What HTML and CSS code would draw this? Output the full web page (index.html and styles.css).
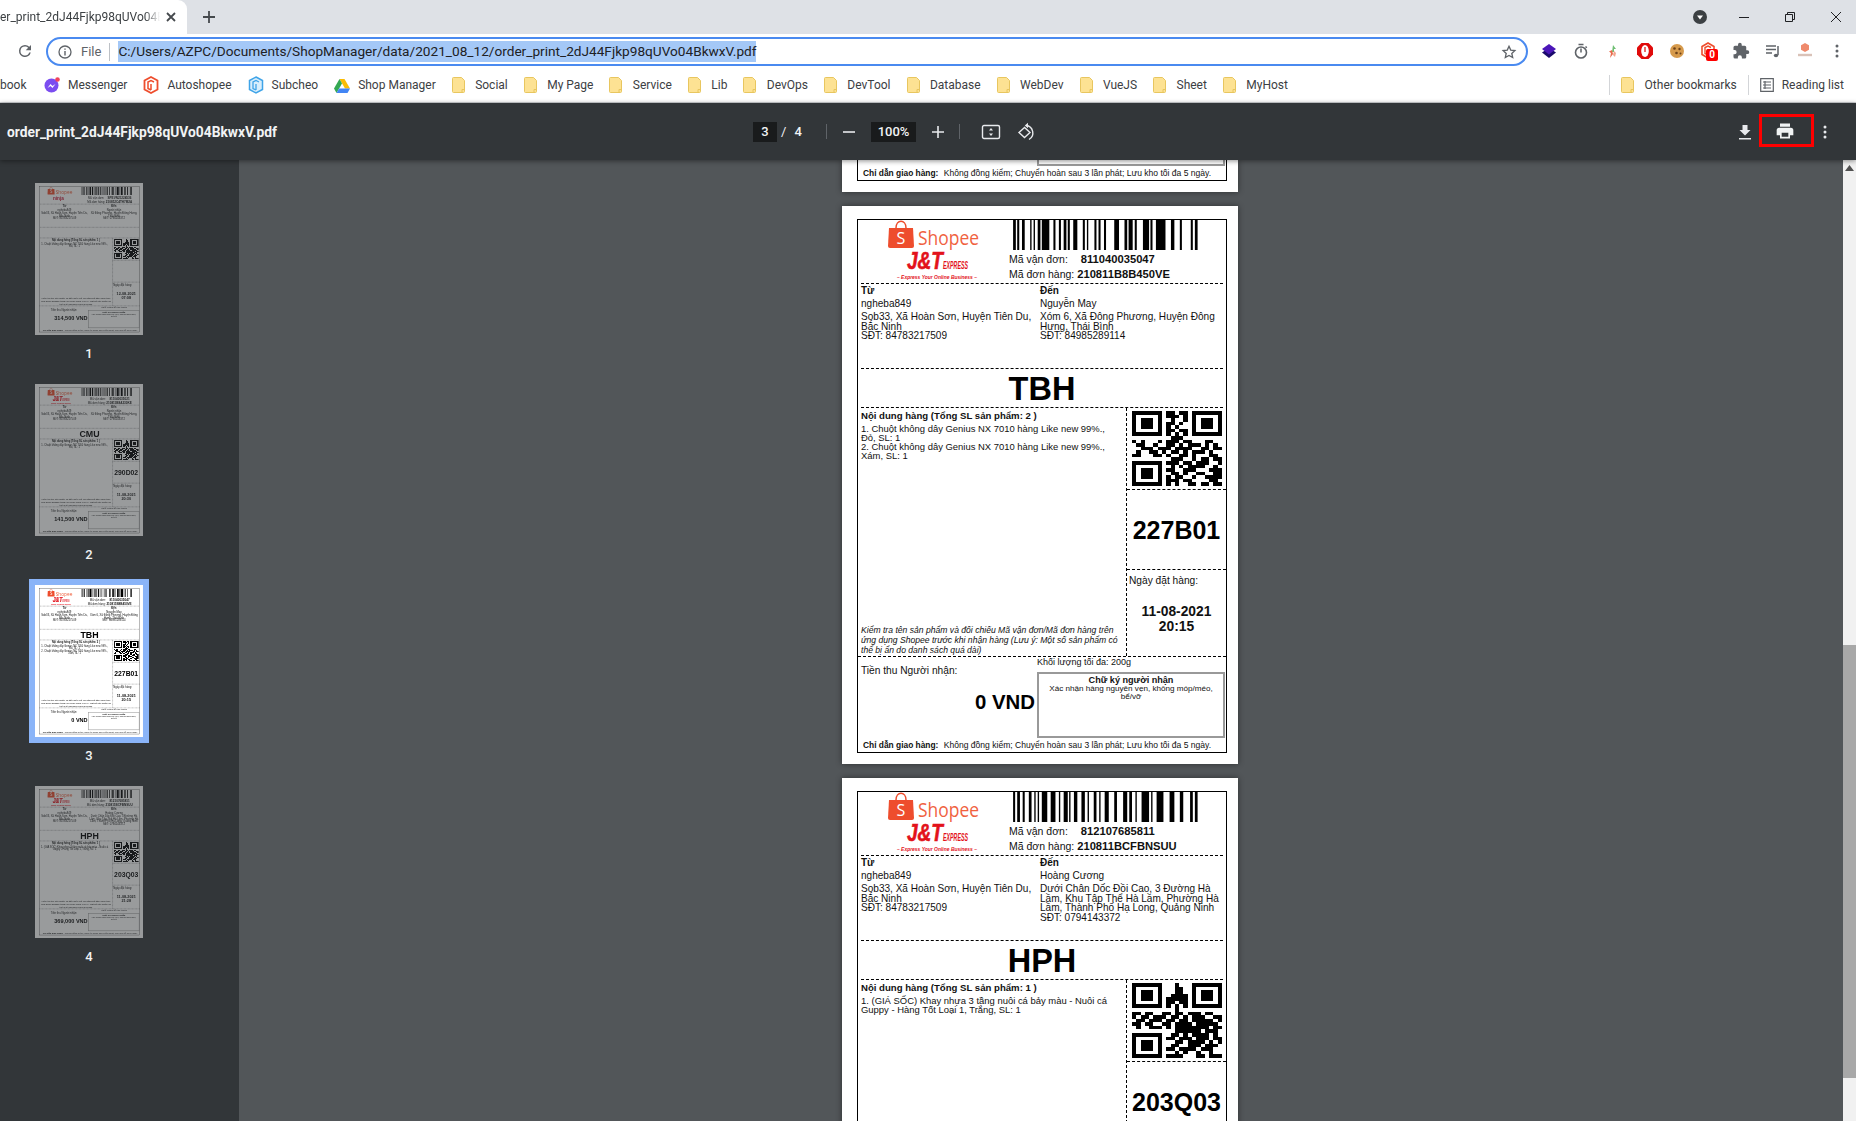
FILE: index.html
```html
<!DOCTYPE html>
<html lang="en">
<head>
  <meta charset="UTF-8">
  <title>order_print_2dJ44Fjkp98qUVo04BkwxV.pdf</title>
  <link rel="stylesheet" href="styles.css">
</head>
<body>
  <svg class="defs" width="0" height="0">
    <symbol id="folder" viewBox="0 0 14 16">
      <path d="M1.500.5h8l3 3v11a1 1 0 0 1-1 1h-10a1 1 0 0 1-1-1V1.500a1 1 0 0 1 1-1z" fill="#fde293" stroke="#e8c65f"/>
      <path d="M10 15.500v-3h3" fill="none" stroke="#e8c65f"/>
    </symbol>
  </svg>

  <div class="tabstrip">
    <div class="tab">
      <span class="tab-title">er_print_2dJ44Fjkp98qUVo04Bkwx</span>
      <svg class="tab-close" width="10" height="10" viewBox="0 0 10 10"><path d="M1 1l8 8M9 1l-8 8" stroke="#45494d" stroke-width="1.800"/></svg>
    </div>
    <svg class="new-tab" width="14" height="14" viewBox="0 0 14 14"><path d="M7 1v12M1 7h12" stroke="#45494d" stroke-width="1.800"/></svg>
    <div class="win-controls">
      <svg class="tab-search" width="14" height="14" viewBox="0 0 14 14"><circle cx="7" cy="7" r="7" fill="#3c4043"/><path d="M4 5.500h6L7 9.500z" fill="#fff"/></svg>
      <svg class="win-btn" width="12" height="12" viewBox="0 0 12 12"><path d="M1 6.500h10" stroke="#202124"/></svg>
      <svg class="win-btn" width="12" height="12" viewBox="0 0 12 12"><path d="M1.500 3.500h7v7h-7zM3.500 3.500v-2h7v7h-2" fill="none" stroke="#202124"/></svg>
      <svg class="win-btn" width="12" height="12" viewBox="0 0 12 12"><path d="M1 1l10 10M11 1L1 11" stroke="#202124"/></svg>
    </div>
  </div>

  <div class="navbar">
    <svg class="reload" width="18" height="18" viewBox="0 0 24 24"><path fill="#5f6368" d="M17.650 6.350A7.960 7.960 0 0 0 12 4a8 8 0 1 0 7.730 10h-2.080A6 6 0 1 1 12 6c1.660 0 3.140.69 4.220 1.780L13 11h7V4z"/></svg>
    <div class="omnibox">
      <svg class="info" width="14" height="14" viewBox="0 0 14 14"><circle cx="7" cy="7" r="6" fill="none" stroke="#5f6368" stroke-width="1.300"/><path d="M7 6v4.500M7 3.500v1.300" stroke="#5f6368" stroke-width="1.400"/></svg>
      <span class="scheme">File</span>
      <span class="omni-sep"></span>
      <span class="url">C:/Users/AZPC/Documents/ShopManager/data/2021_08_12/order_print_2dJ44Fjkp98qUVo04BkwxV.pdf</span>
      <svg class="star" width="16" height="16" viewBox="0 0 24 24"><path fill="none" stroke="#5f6368" stroke-width="2" d="M12 3.500l2.600 5.700 6.200.7-4.600 4.200 1.300 6.100-5.500-3.100-5.500 3.100 1.300-6.100-4.600-4.200 6.200-.7z"/></svg>
    </div>
    <div class="extensions">
      <svg class="ext" width="16" height="16" viewBox="0 0 16 16"><path fill="#1a0a6b" d="M8 5l7 4.500L8 15 1 9.500z"/><path fill="#4b16b8" d="M8 1l7 5-7 5.500L1 6z"/></svg>
      <svg class="ext" width="16" height="16" viewBox="0 0 16 16"><circle cx="8" cy="9.500" r="5.500" fill="none" stroke="#5f6368" stroke-width="1.600"/><path d="M5.500 1.500h5M8 5.500v4M12.500 3.500l1.300 1.300" stroke="#5f6368" stroke-width="1.500" fill="none"/></svg>
      <svg class="ext" width="16" height="16" viewBox="0 0 16 16"><path d="M8 2l3 4H9v3H7z" fill="#6fbf73"/><path d="M7 7l-3 1.500L6 10l-1 5 3-4z" fill="#e8694a"/><path d="M9 8l2 2-1 4-2-2z" fill="#f3a58f"/></svg>
      <svg class="ext" width="18" height="18" viewBox="0 0 18 18"><path fill="#e00b0b" d="M5.500 1h7L17 5.500v7L12.500 17h-7L1 12.500v-7z"/><ellipse cx="9" cy="9" rx="3.800" ry="6" fill="#fff"/><path fill="#e00b0b" d="M8.400 5h1.200v5h-1.200z"/></svg>
      <svg class="ext" width="16" height="16" viewBox="0 0 16 16"><circle cx="8" cy="8" r="7" fill="#d69a4c"/><circle cx="5.500" cy="5.500" r="1.300" fill="#6d4219"/><circle cx="10.500" cy="6" r="1.200" fill="#6d4219"/><circle cx="7.500" cy="10" r="1.300" fill="#6d4219"/><circle cx="11.500" cy="10.500" r="1" fill="#6d4219"/></svg>
      <div class="ext ext-badge">
        <svg width="16" height="18" viewBox="0 0 16 18"><path d="M8 1l6 3.500v8L8 16l-6-3.500v-8z" fill="none" stroke="#ee4d2d" stroke-width="1.600"/><path d="M11 5.500L8 4 5 5.500v6l3 1.500M8 7v6" fill="none" stroke="#ee4d2d" stroke-width="1.400"/></svg>
        <span class="badge">0</span>
      </div>
      <svg class="ext" width="18" height="18" viewBox="0 0 24 24"><path fill="#5f6368" d="M20.500 11H19V7a2 2 0 0 0-2-2h-4V3.500a2.500 2.500 0 0 0-5 0V5H4a2 2 0 0 0-2 2v3.800h1.500a2.700 2.700 0 0 1 0 5.400H2V20a2 2 0 0 0 2 2h3.800v-1.500a2.700 2.700 0 0 1 5.400 0V22H17a2 2 0 0 0 2-2v-4h1.500a2.500 2.500 0 0 0 0-5z"/></svg>
      <svg class="ext" width="16" height="16" viewBox="0 0 16 16"><path d="M1 3h10M1 6.500h10M1 10h6" stroke="#5f6368" stroke-width="1.400"/><path d="M13 3v9" stroke="#5f6368" stroke-width="1.500"/><ellipse cx="11" cy="12.500" rx="2.200" ry="1.700" fill="#5f6368"/></svg>
      <svg class="ext" width="18" height="18" viewBox="0 0 18 18"><path d="M9 1l4 2.300v4.400L9 10 5 7.700V3.300z" fill="#ef8a6c"/><path d="M2 13h14" stroke="#d9c2b8" stroke-width="2.400"/></svg>
      <svg class="ext" width="16" height="16" viewBox="0 0 16 16"><circle cx="8" cy="3" r="1.500" fill="#5f6368"/><circle cx="8" cy="8" r="1.500" fill="#5f6368"/><circle cx="8" cy="13" r="1.500" fill="#5f6368"/></svg>
    </div>
  </div>

  <div class="bookmarks">
    <span class="bm-cut">book</span>
    <a class="bm">
      <svg width="16" height="16" viewBox="0 0 16 16"><circle cx="7.500" cy="8.500" r="7" fill="#7b4df0"/><path d="M3.500 11l3-4 2 2 3-2-3 4-2-2z" fill="#fff"/><circle cx="13.500" cy="2.500" r="2.300" fill="#f0445c"/></svg>
      Messenger
    </a>
    <a class="bm">
      <svg width="16" height="18" viewBox="0 0 16 18"><path d="M8 1l6.500 3.500v9L8 17l-6.500-3.500v-9z" fill="none" stroke="#ee4d2d" stroke-width="1.800"/><path d="M11 6L8 4.500 5 6v6.500l3 1.500M8 8v6" fill="none" stroke="#ee4d2d" stroke-width="1.500"/></svg>
      Autoshopee
    </a>
    <a class="bm">
      <svg width="16" height="18" viewBox="0 0 16 18"><path d="M8 1l6.500 3.500v9L8 17l-6.500-3.500v-9z" fill="#d8eefc" stroke="#3fa4e8" stroke-width="1.500"/><path d="M11 6L8 4.500 5 6v6.500l3 1.500M8 8v6" fill="none" stroke="#3fa4e8" stroke-width="1.300"/></svg>
      Subcheo
    </a>
    <a class="bm">
      <svg width="16" height="15" viewBox="0 0 16 15"><path d="M5.500 1h5L16 10.500h-5z" fill="#fbbc04"/><path d="M5.500 1L0 10.500 2.500 15 8 5.500z" fill="#34a853"/><path d="M2.500 15h11l2.500-4.500H5z" fill="#4285f4"/></svg>
      Shop Manager
    </a>
    <a class="bm"><svg class="fold" width="14" height="16"><use href="#folder"/></svg>Social</a>
    <a class="bm"><svg class="fold" width="14" height="16"><use href="#folder"/></svg>My Page</a>
    <a class="bm"><svg class="fold" width="14" height="16"><use href="#folder"/></svg>Service</a>
    <a class="bm"><svg class="fold" width="14" height="16"><use href="#folder"/></svg>Lib</a>
    <a class="bm"><svg class="fold" width="14" height="16"><use href="#folder"/></svg>DevOps</a>
    <a class="bm"><svg class="fold" width="14" height="16"><use href="#folder"/></svg>DevTool</a>
    <a class="bm"><svg class="fold" width="14" height="16"><use href="#folder"/></svg>Database</a>
    <a class="bm"><svg class="fold" width="14" height="16"><use href="#folder"/></svg>WebDev</a>
    <a class="bm"><svg class="fold" width="14" height="16"><use href="#folder"/></svg>VueJS</a>
    <a class="bm"><svg class="fold" width="14" height="16"><use href="#folder"/></svg>Sheet</a>
    <a class="bm"><svg class="fold" width="14" height="16"><use href="#folder"/></svg>MyHost</a>
    <div class="bm-right">
      <span class="bm-sep"></span>
      <a class="bm"><svg class="fold" width="14" height="16"><use href="#folder"/></svg>Other bookmarks</a>
      <span class="bm-sep"></span>
      <a class="bm">
        <svg width="14" height="14" viewBox="0 0 14 14"><path d="M.7.7h12.600v12.600H.7zM3 4h8M3 7h8M3 10h8M5 3v8" fill="none" stroke="#5f6368" stroke-width="1.200"/></svg>
        Reading list
      </a>
    </div>
  </div>

  <div class="pdf-toolbar">
    <div class="pdf-title">order_print_2dJ44Fjkp98qUVo04BkwxV.pdf</div>
    <div class="pager">
      <span class="num-box page-box">3</span>
      <span class="slash">/</span>
      <span class="total">4</span>
    </div>
    <span class="tb-sep sep-one"></span>
    <svg class="tb-icon minus" width="14" height="14" viewBox="0 0 14 14"><path d="M1 7h12" stroke="#e8eaed" stroke-width="1.600"/></svg>
    <span class="num-box zoom-box">100%</span>
    <svg class="tb-icon plus" width="14" height="14" viewBox="0 0 14 14"><path d="M1 7h12M7 1v12" stroke="#e8eaed" stroke-width="1.600"/></svg>
    <span class="tb-sep sep-two"></span>
    <svg class="tb-icon fit" width="20" height="16" viewBox="0 0 20 16"><rect x="1.500" y="1.500" width="17" height="13" rx="1.500" fill="none" stroke="#e8eaed" stroke-width="1.400"/><path d="M10 4l2 2.500H8zM10 12L8 9.500h4z" fill="#e8eaed"/></svg>
    <svg class="tb-icon rotate" width="20" height="20" viewBox="0 0 20 20"><path d="M7.500 5.500L2 10.500l5.500 5 5.500-5z" fill="none" stroke="#e8eaed" stroke-width="1.400"/><path d="M9 3.500a7.500 7.500 0 0 1 3 14" fill="none" stroke="#e8eaed" stroke-width="1.400"/><path d="M11 .8L7.800 3.500 11 6.200z" fill="#e8eaed"/></svg>
    <div class="tb-right">
      <svg class="tb-icon" width="14" height="16" viewBox="0 0 14 16"><path d="M4.500 1h5v5h3L7 11.500 1.500 6h3zM1 14h12v1.600H1z" fill="#e8eaed"/></svg>
      <div class="print-mark">
        <svg width="20" height="20" viewBox="0 0 24 24"><path fill="#f1f3f4" d="M19 8H5a3 3 0 0 0-3 3v6h4v4h12v-4h4v-6a3 3 0 0 0-3-3zm-3 11H8v-5h8zM18 3H6v4h12z"/></svg>
      </div>
      <svg class="tb-icon" width="4" height="14" viewBox="0 0 4 14"><circle cx="2" cy="2" r="1.500" fill="#e8eaed"/><circle cx="2" cy="7" r="1.500" fill="#e8eaed"/><circle cx="2" cy="12" r="1.500" fill="#e8eaed"/></svg>
    </div>
  </div>

  <div class="viewer">
    <div id="thumbs" class="thumbs"></div>
    <div class="doc">
      <div id="pages" class="pages"></div>
    </div>
    <div class="scrollbar">
      <div class="sb-arrow"><svg width="9" height="6" viewBox="0 0 9 6"><path d="M4.500 0L9 6H0z" fill="#505050"/></svg></div>
      <div class="sb-thumb"></div>
    </div>
  </div>

  <script src="script.js"></script>
</body>
</html>
```

FILE: styles.css
```css
* {
  box-sizing: border-box;
}
body {
  margin: 0;
  height: 100vh;
  overflow: hidden;
  display: flex;
  flex-direction: column;
  font-family: Roboto, "Liberation Sans", sans-serif;
  background: #525659;
}
.defs {
  position: absolute;
}

/* browser chrome */
.tabstrip {
  height: 34px;
  flex: none;
  background: #dee1e6;
  display: flex;
  align-items: center;
}
.tab {
  width: 187px;
  height: 34px;
  background: #fff;
  border-radius: 0 9px 0 0;
  display: flex;
  align-items: center;
  padding-right: 11px;
}
.tab-title {
  flex: 1;
  overflow: hidden;
  white-space: nowrap;
  font-size: 12px;
  color: #3c4043;
  -webkit-mask-image: linear-gradient(to right, #000 145px, transparent 160px);
  mask-image: linear-gradient(to right, #000 145px, transparent 160px);
}
.new-tab {
  margin-left: 15px;
}
.win-controls {
  margin-left: auto;
  display: flex;
  align-items: center;
  padding-right: 14px;
}
.tab-search {
  margin-right: 31px;
}
.win-btn {
  margin-left: 34px;
}
.tab-search + .win-btn {
  margin-left: 0;
}
.navbar {
  height: 34px;
  flex: none;
  background: #fff;
  display: flex;
  align-items: center;
}
.reload {
  margin-left: 16px;
  flex: none;
}
.omnibox {
  width: 1482px;
  height: 29px;
  flex: none;
  margin: 1px 0 0 12px;
  border: 2px solid #4a8af0;
  border-radius: 15px;
  display: flex;
  align-items: center;
  padding: 0 9px 0 10px;
}
.scheme {
  font-size: 13px;
  color: #5f6368;
  margin-left: 9px;
}
.omni-sep {
  width: 1px;
  height: 18px;
  background: #bdc1c6;
  margin: 0 8px 0 8px;
}
.url {
  font-size: 13.650px;
  line-height: 21px;
  background: #a4c8f7;
  color: #202124;
  white-space: nowrap;
}
.star {
  margin-left: auto;
}
.extensions {
  display: flex;
  align-items: center;
  margin-left: 12px;
}
.ext {
  width: 18px;
  margin-right: 14px;
  flex: none;
  position: relative;
  display: block;
}
.ext:last-child {
  margin-right: 0;
}
.ext-badge {
  height: 18px;
}
.badge {
  position: absolute;
  left: 6px;
  top: 7px;
  width: 12px;
  height: 12px;
  background: #f00;
  color: #fff;
  border-radius: 2px;
  font-size: 10px;
  font-weight: 700;
  line-height: 12px;
  text-align: center;
}
.bookmarks {
  height: 35px;
  flex: none;
  background: #fff;
  border-bottom: 1px solid #d3d5d8;
  display: flex;
  align-items: center;
  font-size: 12px;
  color: #3c4043;
  white-space: nowrap;
}
.bm-cut {
  width: 36px;
}
.bm {
  display: flex;
  align-items: center;
  gap: 8px;
  padding: 0 8px;
}
.bm .fold {
  margin-right: 1.400px;
}
.bm-right {
  margin-left: auto;
  display: flex;
  align-items: center;
  padding-right: 4px;
}
.bm-sep {
  width: 1px;
  height: 20px;
  background: #d3d5d8;
  margin: 0 3px;
}

/* pdf toolbar */
.pdf-toolbar {
  height: 57px;
  flex: none;
  background: #323639;
  color: #f1f3f4;
  display: flex;
  align-items: center;
  position: relative;
  z-index: 2;
  box-shadow: 0 1px 5px rgba(0, 0, 0, 0.45);
}
.pdf-title {
  width: 753px;
  padding-left: 7px;
  font-size: 13.800px;
  font-weight: 700;
  flex: none;
}
.pager {
  display: flex;
  align-items: center;
  width: 73px;
  flex: none;
  font-size: 13px;
}
.num-box {
  background: #191b1c;
  height: 20px;
  line-height: 20px;
  text-align: center;
  font-size: 13px;
  font-weight: 500;
  flex: none;
}
.page-box {
  width: 24px;
}
.slash {
  margin-left: 4px;
}
.total {
  margin-left: 8px;
  font-weight: 500;
}
.tb-sep {
  width: 1px;
  height: 15px;
  background: #5f6368;
  flex: none;
}
.tb-icon {
  flex: none;
}
.minus {
  margin-left: 15px;
}
.zoom-box {
  width: 45px;
  margin-left: 15px;
}
.plus {
  margin-left: 15px;
}
.sep-two {
  margin-left: 14px;
}
.fit {
  margin-left: 21px;
}
.rotate {
  margin-left: 16px;
}
.tb-right {
  margin-left: auto;
  display: flex;
  align-items: center;
  padding-right: 29px;
}
.print-mark {
  width: 55px;
  height: 33px;
  margin: -2px 9px 0 7px;
  padding-right: 4px;
  border: 3px solid #f00;
  display: flex;
  align-items: center;
  justify-content: center;
}

/* viewer */
.viewer {
  flex: 1;
  min-height: 0;
  display: flex;
  position: relative;
}
.thumbs {
  width: 239px;
  flex: none;
  background: #323639;
  padding-top: 23px;
  overflow: hidden;
}
.thumb-item {
  height: 201px;
  margin-left: 35px;
  width: 108px;
  color: #f1f3f4;
  text-align: center;
  font-size: 13px;
  font-weight: 500;
}
.thumb-img {
  width: 108px;
  height: 152px;
  overflow: hidden;
  margin-bottom: 11px;
  opacity: 0.5;
}
.thumb-scale {
  width: 396px;
  transform: scale(0.2727);
  transform-origin: 0 0;
  filter: blur(0.5px);
}
.thumb-item.active .thumb-img {
  opacity: 1;
  outline: 6px solid #8ab4f8;
}
.doc {
  flex: 1;
  min-width: 0;
  overflow: hidden;
  padding-right: 2px;
}
.pages {
  display: flex;
  flex-direction: column;
  align-items: center;
  gap: 14px;
}
.scrollbar {
  width: 13px;
  flex: none;
  background: #f1f1f1;
  position: relative;
}
.sb-arrow {
  height: 15px;
  display: flex;
  align-items: center;
  justify-content: center;
}
.sb-thumb {
  margin-top: 470px;
  height: 433px;
  background: #a8a8a8;
}

/* shipping label page */
.page {
  width: 396px;
  height: 558px;
  flex: none;
  background: #fff;
  padding: 13px 11px 11px 15px;
  box-shadow: 0 0 6px rgba(0, 0, 0, 0.45);
  font-family: "Liberation Sans", Arial, sans-serif;
  color: #111;
  font-size: 10.200px;
}
.page-tail {
  height: 32px;
  padding-top: 0;
}
.label {
  height: 534px;
  border: 1px solid #000;
  display: flex;
  flex-direction: column;
}
.page-tail .label {
  height: 21px;
  border-top: 0;
}
.sign-stub {
  width: 188px;
  height: 6px;
  margin-left: 179px;
  flex: none;
  border: 2px solid #999;
  border-top: 0;
}
.l-head {
  height: 64px;
  flex: none;
  display: flex;
  margin: 0 3px;
  border-bottom: 1px dashed #000;
}
.logo {
  width: 149px;
  margin-left: -3px;
  flex: none;
}
.head-right {
  flex: 1;
  padding-left: 2px;
  font-size: 10.500px;
  line-height: 15px;
}
.barcode {
  display: block;
  width: 205px;
  height: 30px;
  margin: 0 0 2px 0;
}
.tracking b {
  display: inline-block;
  font-size: 11.200px;
  font-weight: 700;
}
.track-gap {
  margin-left: 10px;
}
.l-addr {
  height: 85px;
  flex: none;
  margin: 0 3px;
  border-bottom: 1px dashed #000;
  display: flex;
  font-size: 10.050px;
  line-height: 9.500px;
}
.addr-col {
  width: 179px;
  padding-top: 1px;
  padding-right: 1px;
  flex: none;
}
.addr-col + .addr-col {
  flex: 1;
  padding-right: 0;
}
.addr-col h4 {
  margin: 0;
  font-size: 10px;
  line-height: 11px;
}
.addr-name {
  margin: 2px 0 2px;
  line-height: 12px;
}
.l-code {
  height: 39px;
  flex: none;
  margin: 0 3px;
  border-bottom: 1px dashed #000;
  text-align: center;
  font-size: 32.500px;
  font-weight: 700;
  line-height: 40px;
  color: #000;
}
.l-content {
  height: 249px;
  flex: none;
  display: flex;
  border-bottom: 1px dashed #000;
}
.c-left {
  flex: 1;
  padding: 3px 3px 1px 3px;
  display: flex;
  flex-direction: column;
  font-size: 9.450px;
  line-height: 9px;
}
.c-title {
  font-size: 9.600px;
  font-weight: 700;
  line-height: 10px;
  margin-bottom: 3px;
}
.c-item {
  padding-right: 10px;
}
.c-note {
  margin-top: auto;
  font-style: italic;
  font-size: 8.600px;
  line-height: 10px;
}
.c-right {
  width: 100px;
  flex: none;
  border-left: 1px dashed #000;
  display: flex;
  flex-direction: column;
}
.c-qr {
  height: 82px;
  flex: none;
  border-bottom: 1px dashed #000;
  padding: 3px 4px 4px 5px;
}
.c-qr svg {
  display: block;
  width: 90px;
  height: 75px;
}
.c-sort {
  height: 80px;
  flex: none;
  border-bottom: 1px dashed #000;
  text-align: center;
  font-size: 25px;
  font-weight: 700;
  line-height: 80px;
  color: #000;
}
.c-date {
  flex: 1;
  padding-top: 6px;
  text-align: center;
  font-size: 13.800px;
  font-weight: 700;
  line-height: 14.500px;
}
.c-date p {
  margin: 0 0 19px 2px;
  text-align: left;
  font-size: 10.200px;
  line-height: 10px;
  font-weight: 400;
}
.l-bottom {
  height: 81px;
  flex: none;
  display: flex;
}
.b-left {
  width: 179px;
  flex: none;
  padding: 8px 2px 0 3px;
  line-height: 12px;
}
.b-amount {
  margin-top: 15px;
  text-align: right;
  font-size: 20.400px;
  font-weight: 700;
  line-height: 20px;
  color: #000;
}
.b-right {
  flex: 1;
  font-size: 9px;
  line-height: 10px;
}
.sign {
  width: 188px;
  height: 66px;
  margin-top: 5px;
  border: 2px solid #999;
  text-align: center;
  font-size: 8.100px;
  line-height: 8px;
  padding: 2px 6px 0;
}
.sign b {
  display: block;
  font-size: 9.100px;
  line-height: 9px;
}
.l-guide {
  flex: 1;
  padding-left: 5px;
  font-size: 8.550px;
  line-height: 14px;
  white-space: nowrap;
}
.l-guide b {
  margin-right: 3px;
  font-size: 8.400px;
}
```

FILE: script.js
```js
// page data for the shipping labels, used for both the pages and the thumbnails
const BAR_A = [[12,20],[24,30],[38,46],[62,66],[72,76],[84,92],[96,118],[130,136],[146,152],[160,168],[172,178],[188,200],[216,222],[228,232],[250,256],[262,268],[278,284],[308,322],[338,346],[350,362],[368,374],[392,410],[414,420],[430,458],[474,484],[500,506],[532,538],[544,552]];
const BAR_B = [[12,18],[24,32],[40,46],[58,66],[74,78],[84,88],[96,112],[122,136],[146,150],[160,172],[176,180],[190,200],[212,222],[230,234],[248,256],[264,268],[280,292],[308,316],[334,346],[352,360],[370,374],[388,410],[416,420],[432,452],[470,484],[500,510],[530,538],[544,552]];

const QR_A = {
  top: ["11011","11101","01001","11010","10100","11011","10101","01110"],
  mid: ["101000101110110001100","011001001101011101010","001110111011110011011","010011010110101110100","110001101001101000110"],
  bottom: ["0111001011011","1110110111001","0101011110010","1100111000111","0110100110011","1011001001111","1110110000110","1010011011011"]
};
const QR_B = {
  top: ["00100","00110","00110","01111","11111","11011","10101","00100"],
  mid: ["110110011011011101100","101101110110101110011","011011101101101111101","110110011011110111110","010011101011111111011"],
  bottom: ["0011111101110","0110101111010","1101110111011","0011011110101","0110011101110","1101111011100","0010100100100","1111000110111"]
};

const SENDER = { name: "ngheba849", addr: "Sob33, Xã Hoàn Sơn, Huyện Tiên Du, Bắc Ninh", phone: "84783217509" };
const NOTE = "Kiểm tra tên sản phẩm và đối chiếu Mã vận đơn/Mã đơn hàng trên ứng dụng Shopee trước khi nhận hàng (Lưu ý: Một số sản phẩm có thể bị ẩn do danh sách quá dài)";
const GUIDE = `<b>Chỉ dẫn giao hàng:</b> Không đồng kiểm; Chuyển hoàn sau 3 lần phát; Lưu kho tối đa 5 ngày.`;

const pagesData = [
  { carrier: "ninja", tracking: "SPEVN21224536", order: "210812C4TH7M2A", code: "", sort: "", total: 1,
    to: { name: "Người nhận", addr: "Xã Đông Phương, Huyện Đông Hưng, Thái Bình", phone: "0794143372" },
    items: ["1. Chuột không dây Genius NX 7010 hàng Like new 99%., Đỏ, SL: 1"],
    date: "12-08-2021", time: "07:08", amount: "314,500 VND", bars: BAR_B, qr: QR_B },
  { carrier: "jt", tracking: "811040035021", order: "210811B8A230KE", code: "CMU", sort: "290D02", total: 1,
    to: { name: "Người nhận", addr: "Xã Đông Phương, Huyện Đông Hưng, Thái Bình", phone: "0794143372" },
    items: ["1. Chuột không dây Genius NX 7010 hàng Like new 99%., Đỏ, SL: 1"],
    date: "11-08-2021", time: "20:30", amount: "141,500 VND", bars: BAR_B, qr: QR_B },
  { carrier: "jt", tracking: "811040035047", order: "210811B8B450VE", code: "TBH", sort: "227B01", total: 2,
    to: { name: "Nguyễn May", addr: "Xóm 6, Xã Đông Phương, Huyện Đông Hưng, Thái Bình", phone: "84985289114" },
    items: ["1. Chuột không dây Genius NX 7010 hàng Like new 99%., Đỏ, SL: 1", "2. Chuột không dây Genius NX 7010 hàng Like new 99%., Xám, SL: 1"],
    date: "11-08-2021", time: "20:15", amount: "0 VND", bars: BAR_A, qr: QR_A },
  { carrier: "jt", tracking: "812107685811", order: "210811BCFBNSUU", code: "HPH", sort: "203Q03", total: 1,
    to: { name: "Hoàng Cương", addr: "Dưới Chân Dốc Đồi Cao, 3 Đường Hà Lầm, Khu Tập Thể Hà Lầm, Phường Hà Lầm, Thành Phố Hạ Long, Quảng Ninh", phone: "0794143372" },
    items: ["1. (GIÁ SỐC) Khay nhựa 3 tầng nuôi cá bảy màu - Nuôi cá Guppy - Hàng Tốt Loại 1, Trắng, SL: 1"],
    date: "11-08-2021", time: "21:28", amount: "369,000 VND", bars: BAR_B, qr: QR_B }
];

function barcodeSvg(bars) {
  const rects = bars.map(b => `<rect x="${b[0]}" y="0" width="${b[1] - b[0]}" height="90"/>`).join("");
  return `<svg class="barcode" viewBox="0 0 600 90" preserveAspectRatio="none">${rects}</svg>`;
}

// version 1 code, 21 modules a side
function qrSvg(qr) {
  const grid = [];
  for (let r = 0; r < 21; r++) grid.push(new Array(21).fill("0"));
  qr.top.forEach((row, r) => [...row].forEach((v, i) => { grid[r][8 + i] = v; }));
  qr.mid.forEach((row, r) => [...row].forEach((v, i) => { grid[8 + r][i] = v; }));
  qr.bottom.forEach((row, r) => [...row].forEach((v, i) => { grid[13 + r][8 + i] = v; }));
  let rects = "";
  grid.forEach((row, y) => row.forEach((v, x) => {
    if (v === "1") rects += `<rect x="${x}" y="${y}" width="1" height="1"/>`;
  }));
  [[0, 0], [14, 0], [0, 14]].forEach(([x, y]) => {
    rects += `<path fill-rule="evenodd" d="M${x} ${y}h7v7h-7zM${x + 1} ${y + 1}v5h5v-5z"/><rect x="${x + 2}" y="${y + 2}" width="3" height="3"/>`;
  });
  return `<svg viewBox="0 0 21 21" preserveAspectRatio="none" shape-rendering="crispEdges">${rects}</svg>`;
}

function logoSvg(carrier) {
  const shopee = `
    <path d="M31 8h24l1 18a2 2 0 0 1-2 2H32a2 2 0 0 1-2-2z" fill="#ee4d2d"/>
    <path d="M38 8c0-9 10-9 10 0" fill="none" stroke="#ee4d2d" stroke-width="1.500"/>
    <text x="43" y="24" text-anchor="middle" font-family="Open Sans, sans-serif" font-size="16" fill="#fff">S</text>
    <text x="60" y="25" font-family="Open Sans, sans-serif" font-size="20" fill="#f0623f" textLength="61" lengthAdjust="spacingAndGlyphs">Shopee</text>`;
  const red = "#e3121b";
  const jt = `
    <text x="49" y="49" font-family="Liberation Sans, sans-serif" font-weight="700" font-style="italic" font-size="23" fill="${red}" stroke="${red}" stroke-width="0.600" textLength="36" lengthAdjust="spacingAndGlyphs">J&amp;T</text>
    <text x="85" y="49" font-family="Liberation Sans, sans-serif" font-weight="700" font-style="italic" font-size="10.500" fill="${red}" textLength="25" lengthAdjust="spacingAndGlyphs">EXPRESS</text>
    <text x="39" y="59" font-family="Liberation Sans, sans-serif" font-weight="700" font-style="italic" font-size="5.800" fill="${red}" textLength="80" lengthAdjust="spacingAndGlyphs">– Express Your Online Business –</text>`;
  const ninja = `<text x="50" y="50" font-family="Liberation Sans, sans-serif" font-weight="700" font-size="17" fill="#c41230">ninja</text>`;
  return `<svg class="logo" viewBox="0 0 149 63" width="149" height="63">${shopee}${carrier === "ninja" ? ninja : jt}</svg>`;
}

function pageHtml(p) {
  return `
  <div class="page">
    <div class="label">
      <div class="l-head">
        ${logoSvg(p.carrier)}
        <div class="head-right">
          ${barcodeSvg(p.bars)}
          <div class="tracking">Mã vận đơn: <b class="track-gap">${p.tracking}</b></div>
          <div class="tracking">Mã đơn hàng: <b>${p.order}</b></div>
        </div>
      </div>
      <div class="l-addr">
        <div class="addr-col">
          <h4>Từ</h4>
          <div class="addr-name">${SENDER.name}</div>
          <div>${SENDER.addr}</div>
          <div>SĐT: ${SENDER.phone}</div>
        </div>
        <div class="addr-col">
          <h4>Đến</h4>
          <div class="addr-name">${p.to.name}</div>
          <div>${p.to.addr}</div>
          <div>SĐT: ${p.to.phone}</div>
        </div>
      </div>
      <div class="l-code">${p.code}</div>
      <div class="l-content">
        <div class="c-left">
          <div class="c-title">Nội dung hàng (Tổng SL sản phẩm: ${p.total} )</div>
          ${p.items.map(i => `<div class="c-item">${i}</div>`).join("")}
          <div class="c-note">${NOTE}</div>
        </div>
        <div class="c-right">
          <div class="c-qr">${qrSvg(p.qr)}</div>
          <div class="c-sort">${p.sort}</div>
          <div class="c-date">
            <p>Ngày đặt hàng:</p>
            ${p.date}<br>${p.time}
          </div>
        </div>
      </div>
      <div class="l-bottom">
        <div class="b-left">
          Tiền thu Người nhận:
          <div class="b-amount">${p.amount}</div>
        </div>
        <div class="b-right">
          Khối lượng tối đa: 200g
          <div class="sign">
            <b>Chữ ký người nhận</b>
            Xác nhận hàng nguyên vẹn, không móp/méo, bể/vỡ
          </div>
        </div>
      </div>
      <div class="l-guide">${GUIDE}</div>
    </div>
  </div>`;
}

// page 2 is scrolled away, only its last lines show under the toolbar
const pageTail = `
  <div class="page page-tail">
    <div class="label">
      <div class="sign-stub"></div>
      <div class="l-guide">${GUIDE}</div>
    </div>
  </div>`;

document.getElementById("pages").innerHTML = pageTail + pagesData.slice(2).map(pageHtml).join("");

document.getElementById("thumbs").innerHTML = pagesData.map((p, i) => `
  <div class="thumb-item${i === 2 ? " active" : ""}">
    <div class="thumb-img"><div class="thumb-scale">${pageHtml(p)}</div></div>
    ${i + 1}
  </div>`).join("");
```
